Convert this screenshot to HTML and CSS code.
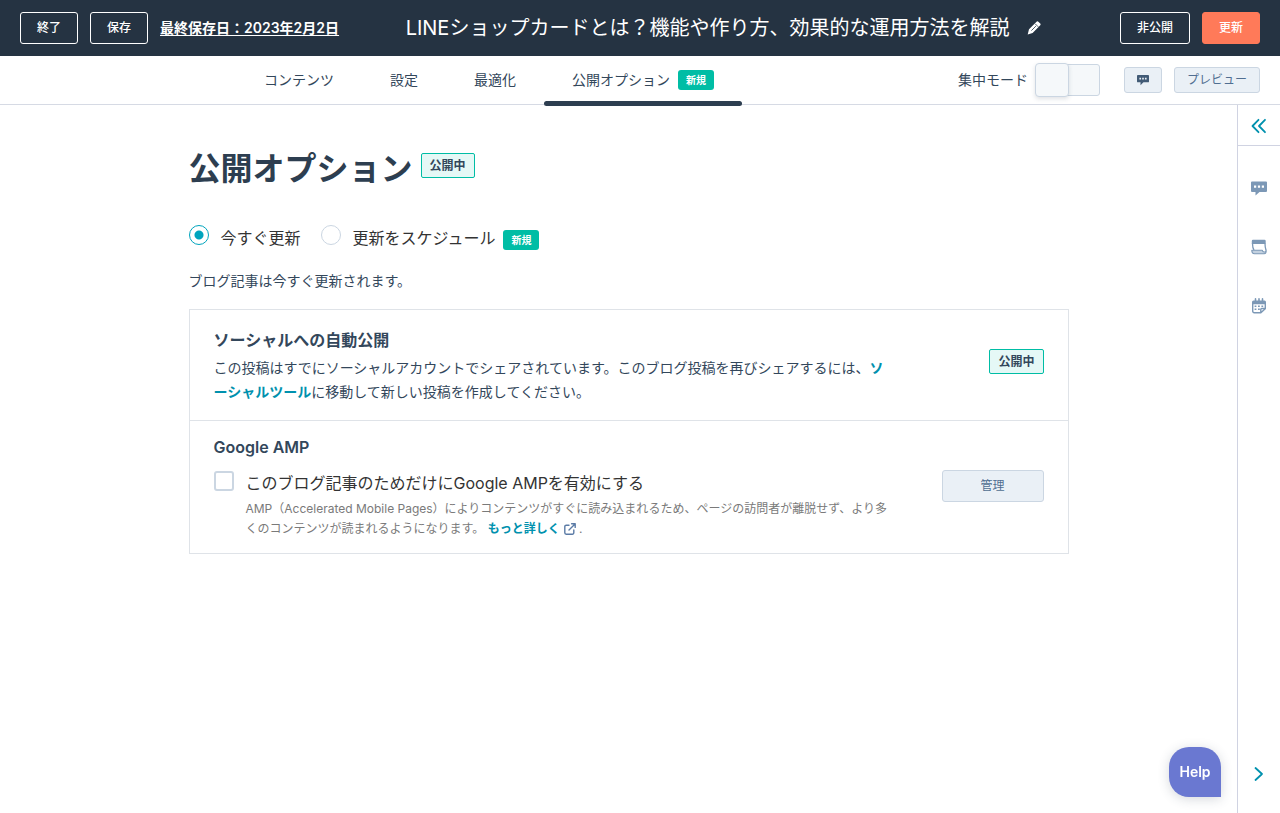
FILE: index.html
```html
<!DOCTYPE html>
<html lang="ja">
<head>
<meta charset="utf-8">
<meta name="viewport" content="width=device-width, initial-scale=1">
<title>公開オプション</title>
<link rel="stylesheet" href="styles.css">
</head>
<body>
<header class="topbar">
  <button class="btn btn-outline" type="button">終了</button>
  <button class="btn btn-outline" type="button">保存</button>
  <a class="saved" href="#">最終保存日：2023年2月2日</a>
  <div class="title-area">
    <span class="title">LINEショップカードとは？機能や作り方、効果的な運用方法を解説</span>
    <button class="icon-btn" type="button" aria-label="タイトルを編集">
      <svg width="14" height="14" viewBox="0 0 14 14"><path fill="#fff" d="M9.3.9a1.6 1.6 0 0 1 2.3 0l1.4 1.4a1.6 1.6 0 0 1 0 2.3L5.6 12 .7 13.4 2 8.3z"/><path d="M8.2 2.8l3 3M4.4 9.6l4.5-4.5" stroke="#253342" stroke-width=".8" fill="none"/></svg>
    </button>
  </div>
  <button class="btn btn-outline" type="button">非公開</button>
  <button class="btn btn-primary" type="button">更新</button>
</header>

<nav class="navbar">
  <div class="tabs">
    <a class="tab" href="#">コンテンツ</a>
    <a class="tab" href="#">設定</a>
    <a class="tab" href="#">最適化</a>
    <a class="tab tab-active" href="#" aria-current="page">公開オプション<span class="new">新規</span></a>
  </div>
  <div class="tools">
    <label class="focus-mode"><span>集中モード</span><input class="toggle" type="checkbox" role="switch"></label>
    <button class="btn-small btn-comment" type="button" aria-label="コメント">
      <svg width="12" height="12" viewBox="0 0 13 12"><path fill="#425b76" d="M1 .5h11a1 1 0 0 1 1 1v6a1 1 0 0 1-1 1H7L3.800 11.600V8.500H1a1 1 0 0 1-1-1v-6a1 1 0 0 1 1-1z"/><path fill="#eaf0f6" d="M2.600 3.600h1.800v1.800H2.600zM5.600 3.600h1.800v1.800H5.600zM8.600 3.600h1.800v1.800H8.600z"/></svg>
    </button>
    <button class="btn-small" type="button">プレビュー</button>
  </div>
</nav>

<div class="layout">
  <main class="main">
    <div class="content">
      <div class="heading">
        <h1>公開オプション</h1>
        <span class="status">公開中</span>
      </div>
      <div class="radios">
        <label class="option"><input class="radio" type="radio" name="when" checked><span>今すぐ更新</span></label>
        <label class="option"><input class="radio" type="radio" name="when"><span>更新をスケジュール<span class="new">新規</span></span></label>
      </div>
      <p class="note">ブログ記事は今すぐ更新されます。</p>

      <div class="card">
        <section class="row">
          <div class="row-text">
            <h2>ソーシャルへの自動公開</h2>
            <p>この投稿はすでにソーシャルアカウントでシェアされています。このブログ投稿を再びシェアするには、<a class="link" href="#">ソーシャルツール</a>に移動して新しい投稿を作成してください。</p>
          </div>
          <span class="status row-status">公開中</span>
        </section>
        <section class="row">
          <div class="row-text">
            <h2>Google AMP</h2>
            <div class="amp">
              <input class="check" type="checkbox" id="amp">
              <div class="amp-text">
                <label class="amp-label" for="amp">このブログ記事のためだけにGoogle AMPを有効にする</label>
                <p class="help-text">AMP（Accelerated Mobile Pages）によりコンテンツがすぐに読み込まれるため、ページの訪問者が離脱せず、より多くのコンテンツが読まれるようになります。 <a class="link" href="#">もっと詳しく<svg class="external" width="12" height="12" viewBox="0 0 12 12" fill="none" stroke="#5b7ba6" stroke-width="1.4" stroke-linecap="round" stroke-linejoin="round"><path d="M5 2.200H2.200A1.400 1.400 0 0 0 .8 3.600v6.200a1.400 1.400 0 0 0 1.400 1.400h6.200a1.400 1.400 0 0 0 1.400-1.400V7M7.600.8h3.600v3.600M11 1 5 7"/></svg></a> .</p>
              </div>
            </div>
          </div>
          <button class="btn-manage" type="button">管理</button>
        </section>
      </div>
    </div>
  </main>

  <aside class="side">
    <button class="side-btn side-top" type="button" aria-label="開く">
      <svg width="16" height="16" viewBox="0 0 16 16" fill="none" stroke="#0091ae" stroke-width="1.8" stroke-linecap="round" stroke-linejoin="round"><path d="M7.500 1.800 1.500 8l6 6.200M14 1.800 8 8l6 6.200"/></svg>
    </button>
    <div class="side-icons">
      <button class="side-btn" type="button" aria-label="コメント">
        <svg width="16" height="16" viewBox="0 0 16 16"><path fill="#7c98b6" d="M1 1.500h14a1 1 0 0 1 1 1V11a1 1 0 0 1-1 1H8.500L4.500 15.500V12H1a1 1 0 0 1-1-1V2.500a1 1 0 0 1 1-1z"/><path fill="#fff" d="M3 5.500h2.200v2.200H3zM6.900 5.500h2.200v2.200H6.900zM10.800 5.500H13v2.200h-2.200z"/></svg>
      </button>
      <button class="side-btn" type="button" aria-label="コンテンツ">
        <svg width="16" height="16" viewBox="0 0 16 16"><path fill="#7c98b6" d="M2 .8h11.500a1.200 1.200 0 0 1 1.200 1.200v3H.8V2A1.200 1.200 0 0 1 2 .8z"/><path d="M1.500 4.500c0 3 .3 4.800 1.500 6.500M14 4.500c0 3 .3 4.500 1 6.800" fill="none" stroke="#7c98b6" stroke-width="1.300"/><path fill="#c3d1e0" stroke="#7c98b6" stroke-width="1.100" stroke-linejoin="round" d="M.8 11.200h10.400c.4 1.500 1.200 2 2.300 1.800 1 0 1.600-.8 1.600-1.800.3 2-.3 3.600-2 3.600H3.500C1.700 14.800.8 13.500.8 11.200z"/></svg>
      </button>
      <button class="side-btn" type="button" aria-label="カレンダー">
        <svg width="16" height="16" viewBox="0 0 16 16"><path d="M4.500.9v3M8 .9v3M11.500.9v3" stroke="#7c98b6" stroke-width="1.600" stroke-linecap="round"/><path fill="#7c98b6" d="M2.500 2.500h11A1.500 1.500 0 0 1 15 4v2.200H1V4a1.500 1.500 0 0 1 1.500-1.500z"/><path d="M1.700 5v8.200a1.500 1.500 0 0 0 1.500 1.500h6.600l4.500-4V5M9.800 14.500v-3.200a.8.8 0 0 1 .8-.8h3.600" fill="none" stroke="#7c98b6" stroke-width="1.400"/><path fill="#7c98b6" d="M3.600 7.500h1.800v1.600H3.600zM7 7.500h1.800v1.600H7zM10.400 7.500h1.800v1.600h-1.800zM3.600 10.500h1.800v1.600H3.600zM7 10.500h1.800v1.600H7z"/></svg>
      </button>
    </div>
    <button class="side-btn side-next" type="button" aria-label="次へ">
      <svg width="10" height="16" viewBox="0 0 10 16" fill="none" stroke="#0091ae" stroke-width="1.800" stroke-linecap="round" stroke-linejoin="round"><path d="M1.500 2 8 8l-6.500 6"/></svg>
    </button>
  </aside>
</div>
<button class="help" type="button">Help</button>
</body>
</html>
```
FILE: styles.css
```css
*, *::before, *::after { box-sizing: border-box; }

body {
  margin: 0;
  min-height: 100vh;
  display: flex;
  flex-direction: column;
  background: #fff;
  color: #33475b;
  font-family: Inter, "Noto Sans CJK JP", sans-serif;
  font-size: 14px;
  line-height: 24px;
}

h1, h2, p { margin: 0; }
button, input { font: inherit; margin: 0; }
button { cursor: pointer; }
svg { display: block; }

.topbar {
  display: flex;
  align-items: center;
  gap: 12px;
  height: 56px;
  padding: 0 20px;
  background: #253342;
  color: #fff;
  white-space: nowrap;
}

.btn {
  height: 32px;
  padding: 0 16px;
  border: 1px solid #fff;
  border-radius: 3px;
  background: transparent;
  color: #fff;
  font-size: 12px;
  font-weight: 500;
  line-height: 16px;
}
.btn-primary { background: #ff7a59; border-color: #ff7a59; }

.saved {
  color: #fff;
  font-weight: 600;
  text-decoration: underline;
  text-underline-offset: 2px;
}

.title-area {
  flex: 1;
  display: flex;
  align-items: center;
  justify-content: center;
  gap: 18px;
  padding-right: 12px;
}
.title { font-size: 20px; }
.icon-btn { padding: 0; border: 0; background: none; }

.navbar {
  display: flex;
  align-items: center;
  height: 49px;
  padding: 0 20px;
  border-bottom: 1px solid #d6dae4;
  white-space: nowrap;
}
.tabs {
  flex: 1;
  display: flex;
  justify-content: center;
  align-self: stretch;
}
.tab {
  position: relative;
  display: flex;
  align-items: center;
  padding: 0 28px;
  color: #33475b;
  text-decoration: none;
}
.tab-active::after {
  content: "";
  position: absolute;
  left: 0;
  right: 0;
  bottom: -2px;
  height: 5px;
  border-radius: 3px;
  background: #2d3e50;
}

.new {
  display: inline-block;
  margin-left: 8px;
  padding: 0 8px;
  border-radius: 3px;
  background: #00bda5;
  color: #fff;
  font-size: 10px;
  font-weight: 600;
  line-height: 20px;
}

.tools { display: flex; align-items: center; gap: 12px; }
.focus-mode {
  display: flex;
  align-items: center;
  gap: 8px;
  margin-right: 12px;
}
.toggle {
  appearance: none;
  display: flex;
  align-items: center;
  width: 64px;
  height: 32px;
  border: 1px solid #cbd6e2;
  border-radius: 3px;
  background: #f5f8fa;
}
.toggle::before {
  content: "";
  flex: none;
  width: 34px;
  height: 34px;
  margin-left: -2px;
  border: 1px solid #cbd6e2;
  border-radius: 4px;
  background: #f5f8fa;
  box-shadow: 0 2px 4px rgba(45, 62, 80, .15);
}
.btn-small {
  height: 26px;
  padding: 0 12px;
  border: 1px solid #cbd6e2;
  border-radius: 3px;
  background: #eaf0f6;
  color: #506e91;
  font-size: 12px;
  line-height: 16px;
}

.layout { flex: 1; display: flex; }
.main { flex: 1; padding: 44px 20px 44px 40px; }
.content { max-width: 880px; margin: 0 auto; }

.heading { display: flex; align-items: flex-start; gap: 8px; }
h1 { color: #2d3e50; font-size: 32px; font-weight: 600; line-height: 40px; }
.status {
  flex: none;
  padding: 0 8px;
  border: 1px solid #00bda5;
  border-radius: 2px;
  background: #e5f8f6;
  color: #33475b;
  font-size: 12px;
  font-weight: 600;
  line-height: 23px;
}
.heading .status { margin-top: 4px; }

.radios { display: flex; gap: 20px; margin-top: 36px; }
.option {
  display: flex;
  align-items: flex-start;
  gap: 12px;
  color: #333;
  font-size: 16px;
}
.radio {
  appearance: none;
  flex: none;
  width: 20px;
  height: 20px;
  border: 1px solid #cbd6e2;
  border-radius: 50%;
  background: #fff;
}
.radio:checked {
  border-color: #00a4bd;
  background: radial-gradient(circle, #00a4bd 0 4px, #fff 5px);
}
.option span { line-height: 26px; }
.option .new { line-height: 20px; }

.note { margin-top: 18px; }

.card { margin-top: 16px; border: 1px solid #dfe3e8; }
.row {
  display: flex;
  align-items: center;
  justify-content: space-between;
  gap: 24px;
  padding: 16px 24px;
}
.row + .row { border-top: 1px solid #dfe3e8; padding: 12px 24px 14px; }
.row-text { max-width: 676px; }
h2 {
  margin-bottom: 2px;
  font-size: 16px;
  font-weight: 600;
  line-height: 28px;
}
.row-status { margin-bottom: 8px; }
.link { color: #0091ae; font-weight: 600; text-decoration: none; }

.amp { display: flex; align-items: flex-start; gap: 12px; margin-top: 8px; }
.check {
  appearance: none;
  flex: none;
  width: 20px;
  height: 20px;
  margin-top: 2px;
  border: 2px solid #cbd6e2;
  border-radius: 3px;
  background: #fff;
}
.amp-label {
  display: block;
  margin-bottom: 2px;
  color: #333;
  font-size: 16px;
  line-height: 28px;
}
.help-text { color: #7a7a7a; font-size: 12px; line-height: 20px; }
.external { display: inline-block; margin-left: 4px; vertical-align: -2px; }
.btn-manage {
  flex: none;
  width: 102px;
  height: 32px;
  border: 1px solid #cbd6e2;
  border-radius: 3px;
  background: #eaf0f6;
  color: #506e91;
  font-size: 12px;
}

.side {
  display: flex;
  flex-direction: column;
  width: 43px;
  border-left: 1px solid #d0d3e2;
}
.side-btn {
  display: flex;
  align-items: center;
  justify-content: center;
  padding: 0;
  border: 0;
  background: none;
}
.side-top { height: 41px; padding-top: 2px; border-bottom: 1px solid #d0d3e2; }
.side-icons { display: flex; flex-direction: column; gap: 43px; margin-top: 34px; }
.side-next { margin-top: auto; margin-bottom: 31px; }

.help {
  position: fixed;
  right: 59px;
  bottom: 16px;
  width: 52px;
  height: 50px;
  padding: 0;
  border: 0;
  border-radius: 20px 20px 0 20px;
  background: #6a78d1;
  color: #fff;
  font-weight: 600;
  box-shadow: 0 2px 12px rgba(45, 62, 80, .2);
}
```
